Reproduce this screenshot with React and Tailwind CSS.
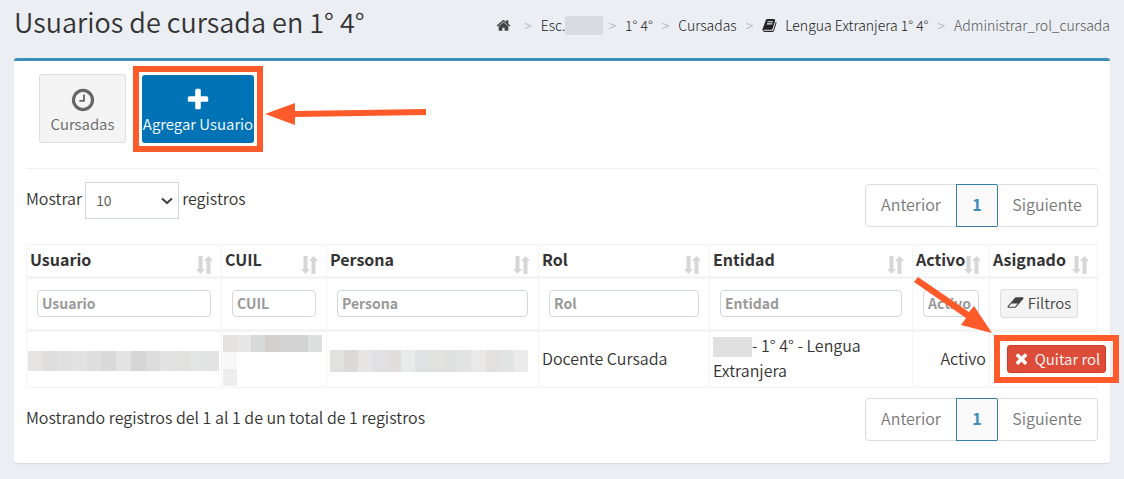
import React, { useState } from 'react';

const ICONS = {
  home: 'M1472 992v480q0 26-19 45t-45 19h-384v-384h-256v384h-384q-26 0-45-19t-19-45v-480q0-1 .5-3t.5-3l575-474 575 474q1 2 1 6zm223-69l-62 74q-8 9-21 11h-3q-13 0-21-7l-692-577-692 577q-12 8-24 7-13-2-21-11l-62-74q-8-10-7-23.5t11-21.5l719-599q32-26 76-26t76 26l244 204v-195q0-14 9-23t23-9h192q14 0 23 9t9 23v408l219 182q10 8 11 21.5t-7 23.5z',
  plus: 'M1600 736v192q0 40-28 68t-68 28h-416v416q0 40-28 68t-68 28h-192q-40 0-68-28t-28-68v-416h-416q-40 0-68-28t-28-68v-192q0-40 28-68t68-28h416v-416q0-40 28-68t68-28h192q40 0 68 28t28 68v416h416q40 0 68 28t28 68z',
  times: 'M1490 1322q0 40-28 68l-136 136q-28 28-68 28t-68-28l-294-294-294 294q-28 28-68 28t-68-28l-136-136q-28-28-28-68t28-68l294-294-294-294q-28-28-28-68t28-68l136-136q28-28 68-28t68 28l294 294 294-294q28-28 68-28t68 28l136 136q28 28 28 68t-28 68l-294 294 294 294q28 28 28 68z',
  clock: 'M1024 544v448q0 14-9 23t-23 9h-320q-14 0-23-9t-9-23v-64q0-14 9-23t23-9h224v-352q0-14 9-23t23-9h64q14 0 23 9t9 23zm416 352q0-148-73-273t-198-198-273-73-273 73-198 198-73 273 73 273 198 198 273 73 273-73 198-198 73-273zm224 0q0 209-103 385.5t-279.5 279.5-385.5 103-385.5-103-279.5-279.5-103-385.5 103-385.5 279.5-279.5 385.5-103 385.5 103 279.5 279.5 103 385.5z',
  eraser: 'M960 1408l336-384h-768l-336 384h768zm1013-1077q15 34 9.5 71.5t-30.5 65.5l-896 1024q-38 44-96 44h-768q-38 0-69.5-20.5t-47.5-54.5q-15-34-9.5-71.5t30.5-65.5l896-1024q38-44 96-44h768q38 0 69.5 20.5t47.5 54.5z',
  book: 'M1703 478q40 57 18 129l-275 906q-19 64-76.5 107.5t-122.5 43.5h-923q-77 0-148.5-53.5t-99.5-131.5q-24-67-2-127 0-4 3-27t4-37q1-8-3-21.5t-3-19.5q2-11 8-21t16.5-23.5 16.5-23.5q23-38 45-91.5t30-91.5q3-10 .5-30t-.5-28q3-11 17-28t17-23q21-36 42-92t25-90q1-9-2.5-32t.5-28q4-13 22-30.5t22-22.5q19-26 42.5-84.5t27.5-96.5q1-8-3-25.5t-2-26.5q2-8 9-18t18-23 17-21q8-12 16.5-30.5t15-35 16-36 19.5-32 26.5-23.5 36-11.5 47.5 5.5l-1 3q38-9 51-9h761q74 0 114 56t18 130l-274 906q-36 119-71.5 153.5t-128.5 34.5h-869q-27 0-38 15-11 16-1 43 24 70 144 70h923q29 0 56-15.5t35-41.5l300-987q7-22 5-57 38 15 59 43zm-1064 2q-4 13 2 22.5t20 9.5h608q13 0 25.5-9.5t16.5-22.5l21-64q4-13-2-22.5t-20-9.5h-608q-13 0-25.5 9.5t-16.5 22.5zm-83 256q-4 13 2 22.5t20 9.5h608q13 0 25.5-9.5t16.5-22.5l21-64q4-13-2-22.5t-20-9.5h-608q-13 0-25.5 9.5t-16.5 22.5z',
};

const Icon = ({ name, className }) => (
  <svg
    viewBox={name === 'eraser' ? '0 0 2048 1792' : '0 0 1792 1792'}
    fill="currentColor"
    aria-hidden="true"
    className={className}
  >
    <path d={ICONS[name]} />
  </svg>
);

const SortIcon = () => (
  <svg viewBox="0 0 17 18" fill="#d6d6d6" aria-hidden="true" className="absolute right-2 bottom-0.5 h-[18px] w-[17px]">
    <path d="M2.500 0h4v13H9l-4.500 5L0 13h2.500z" />
    <path d="M10.500 18h4V5H17l-4.500-5L8 5h2.500z" />
  </svg>
);

const columns = [
  { name: 'Usuario', width: 'w-[195px]' },
  { name: 'CUIL', width: 'w-[105px]' },
  { name: 'Persona', width: 'w-[212px]' },
  { name: 'Rol', width: 'w-[171px]' },
  { name: 'Entidad', width: '' },
  { name: 'Activo', width: 'w-[77px]' },
  { name: 'Asignado', width: 'w-[108px]' },
];

// Hidden personal data, drawn as a strip of tinted blocks
const Masked = ({ colors, className }) => (
  <div className={`flex ${className}`}>
    {colors.map((color, i) => (
      <span key={i} className="flex-1" style={{ backgroundColor: color }} />
    ))}
  </div>
);

const userMask = ['#e5e4e2', '#dedede', '#e0e0e0', '#e2e2e2', '#dfdfdf', '#dadada', '#e3e3e3', '#d6d6d6', '#dcdcdc', '#e2e2e2', '#e1e1df', '#e2e5e4', '#e3e3e3'];
const cuilMask = ['#e4e3e1', '#e7e7e7', '#d7dad8', '#d2d1cf', '#d3d3d3', '#d3d3d3', '#dde0df'];
const personaMask = ['#e1e1df', '#dbdad8', '#e5e5e5', '#e1e1e3', '#e0dfdd', '#e9ebea', '#dfe1e4', '#e1e1df', '#dfe1e1', '#e3e3e3', '#e9e9e9', '#e2e1e0', '#e2e4e3', '#ebebeb'];

const Pagination = () => (
  <nav className="flex h-[43px] text-[16px] leading-[24px] text-[#777777]">
    <button type="button" className="w-[92px] rounded-l border border-[#dddddd] pb-1">Anterior</button>
    <button type="button" className="-ml-px w-[42px] border border-[#367fa9] bg-[#fafafa] pb-1 font-bold text-[#3c8dbc]">1</button>
    <button type="button" className="-ml-px w-[101px] rounded-r border border-l-0 border-[#dddddd] pb-1">Siguiente</button>
  </nav>
);

const Separator = () => <span className="text-[#aaaaaa]">&gt;</span>;

const App = () => {
  const [pageSize, setPageSize] = useState('10');

  return (
    <div className="min-h-screen bg-[#ebeef3] px-3.5 pb-4 font-['Source_Sans_Pro','Noto_Sans_CJK_SC',sans-serif] text-[16px] leading-[25px] font-[350] text-[#333333]">
      <header className="flex h-[58px] items-start justify-between">
        <h1 className="pt-[3px] text-[27px] leading-[38px] font-[350]">Usuarios de cursada en 1° 4°</h1>
        <nav className="flex items-center gap-[9px] pt-[13px] text-[14px] leading-[24px] font-light text-[#222222]">
          <a href="#" aria-label="Inicio" className="mr-1"><Icon name="home" className="size-[15px] text-[#444444]" /></a>
          <Separator />
          <a href="#" className="flex items-center">Esc.<span className="-mr-1 h-[19px] w-[38px] bg-[#d8dbe0]" /></a>
          <Separator />
          <a href="#">1° 4°</a>
          <Separator />
          <a href="#">Cursadas</a>
          <Separator />
          <a href="#" className="flex items-center gap-2"><Icon name="book" className="size-[15px]" />Lengua Extranjera 1° 4°</a>
          <Separator />
          <span className="text-[#555555]">Administrar_rol_cursada</span>
        </nav>
      </header>

      <main className="rounded-[3px] border-t-3 border-[#3c8dbc] bg-white px-3 pb-[22px] shadow-[0_1px_1px_rgba(0,0,0,0.1)]">
        <div className="flex h-[108px] items-start border-b border-[#eeeeee] pt-[5px] pl-[13px]">
          <button type="button" className="mt-2 flex h-[69px] w-[87px] flex-col items-center rounded-[3px] border border-[#dddddd] bg-[#f4f4f4] pt-3 text-[15px] leading-[22px] text-[#666666]">
            <Icon name="clock" className="size-[26px]" />
            Cursadas
          </button>
          <div className="relative ml-[7px] border-6 border-[#ff5a2a] p-[3px]">
            <button type="button" className="flex h-[68px] w-[112px] flex-col items-center rounded-[3px] bg-[#0073b7] pt-3 text-[15px] leading-[22px] whitespace-nowrap text-white">
              <Icon name="plus" className="size-[26px]" />
              Agregar Usuario
            </button>
            <svg viewBox="0 0 162 24" fill="#ff5a2a" aria-hidden="true" className="absolute top-[30px] left-[126px] h-[24px] w-[162px]">
              <path d="M0 12L30 1v8l131-2v6L30 15v8z" />
            </svg>
          </div>
        </div>

        <div className="flex items-start justify-between pt-[13px]">
          <label className="flex items-start">
            <span className="pt-1">Mostrar</span>
            <span className="relative mx-[3px]">
              <select
                value={pageSize}
                onChange={(e) => setPageSize(e.target.value)}
                className="block h-[37px] w-[94px] appearance-none border border-[#d2d6de] bg-white px-2.5 text-[14px] text-[#555555]"
              >
                <option value="10">10</option>
                <option value="25">25</option>
                <option value="50">50</option>
              </select>
              <svg viewBox="0 0 12 8" fill="none" stroke="#444444" strokeWidth="2.200" aria-hidden="true" className="pointer-events-none absolute top-[15px] right-[6px] h-[8px] w-[12px]">
                <path d="M1 1.500l5 4.500 5-4.500" />
              </svg>
            </span>
            <span className="pt-1">registros</span>
          </label>
          <div className="pt-0.5"><Pagination /></div>
        </div>

        <div className="relative mt-[17px]">
          <table className="w-full table-fixed border-collapse">
            <thead>
              <tr className="h-[33px] border-b-3 border-[#f4f4f4]">
                {columns.map((col) => (
                  <th key={col.name} className={`relative border-x border-t border-[#f4f4f4] p-0 pl-[3px] text-left align-top leading-[29px] ${col.width}`}>
                    {col.name}
                    <SortIcon />
                  </th>
                ))}
              </tr>
              <tr className="h-[53px] border-b-3 border-[#f4f4f4]">
                {columns.map((col) => (
                  <th key={col.name} className="border-x border-[#f4f4f4] p-0 px-2.5 pb-0.5">
                    {col.name === 'Asignado' ? (
                      <button type="button" className="flex h-[29px] w-[78px] items-center justify-center gap-1 rounded-[3px] border border-[#dddddd] bg-[#f4f4f4] pb-0.5 text-[15px] font-[350] text-[#444444]">
                        <Icon name="eraser" className="h-[15px] w-[17px]" />
                        Filtros
                      </button>
                    ) : (
                      <input
                        type="text"
                        aria-label={col.name}
                        placeholder={col.name}
                        className="block h-[27px] w-full rounded border border-[#d2d6de] px-1 text-[14px] leading-[20px] font-bold placeholder:text-[#999999]"
                      />
                    )}
                  </th>
                ))}
              </tr>
            </thead>
            <tbody>
              <tr className="h-[57px] border-b border-[#f4f4f4]">
                <td className="border-x border-[#f4f4f4] p-0 pt-0.5 pl-px"><Masked colors={userMask} className="h-[20px] w-[191px]" /></td>
                <td className="border-x border-[#f4f4f4] p-0 pt-0.5 pl-px">
                  <Masked colors={cuilMask} className="h-[17px] w-[99px]" />
                  <div className="h-[17px] w-[14px] bg-[#f8f8f8]" />
                  <div className="h-[17px] w-[14px] bg-[#ededed]" />
                </td>
                <td className="border-x border-[#f4f4f4] p-0 pt-0.5 pl-[3px]"><Masked colors={personaMask} className="h-[22px] w-[198px]" /></td>
                <td className="border-x border-[#f4f4f4] p-0 pb-0.5 pl-[3px]">Docente Cursada</td>
                <td className="border-x border-[#f4f4f4] p-0 pb-1 pl-[3px]">
                  <span className="inline-block h-[20px] w-[39px] bg-[#e0e0e0] align-middle" />- 1° 4° - Lengua Extranjera
                </td>
                <td className="border-x border-[#f4f4f4] p-0 pr-[3px] pb-0.5 text-right">Activo</td>
                <td className="border-x border-[#f4f4f4] p-0 pb-0.5 pl-1">
                  <div className="relative w-[125px] border-6 border-[#ff5a2a] py-1 pl-[7px]">
                    <button type="button" className="flex h-[28px] w-[99px] items-center justify-center gap-[5px] rounded-[3px] border border-[#d73925] bg-[#dd4b39] text-[15px] whitespace-nowrap text-white">
                      <Icon name="times" className="size-[17px]" />
                      Quitar rol
                    </button>
                  </div>
                </td>
              </tr>
            </tbody>
          </table>
          <svg viewBox="0 0 80 58" fill="#ff5a2a" aria-hidden="true" className="absolute top-[32px] right-[105px] h-[58px] w-[80px]">
            <path d="M5 1L56 36l5-6 18 27-31-8 5-7L1 6z" />
          </svg>
        </div>

        <div className="flex items-start justify-between pt-2.5">
          <p className="pt-[7px]">Mostrando registros del 1 al 1 de un total de 1 registros</p>
          <Pagination />
        </div>
      </main>
    </div>
  );
};

export default App;
